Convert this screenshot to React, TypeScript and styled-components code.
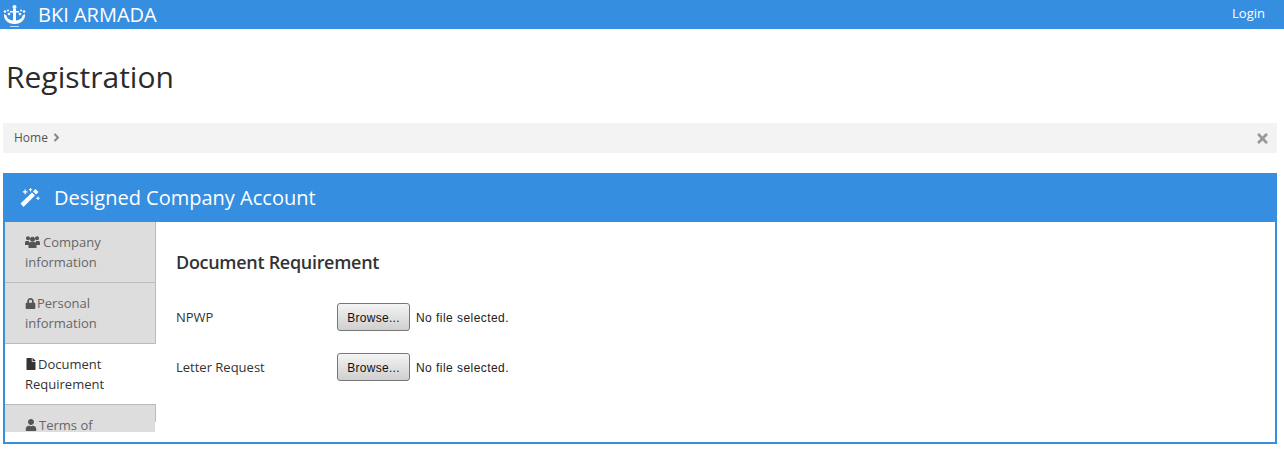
import React from "react";
import styled, { createGlobalStyle } from "styled-components";
import { FaAngleRight, FaFile, FaLock, FaTimes, FaUser } from "react-icons/fa";

const GlobalStyle = createGlobalStyle`
  html, body {
    margin: 0;
    padding: 0;
    background: #fff;
    font-family: "Open Sans", sans-serif;
    color: #333;
    overflow: hidden;
  }
`;

const Navbar = styled.div`
  height: 29px;
  background: #368ee0;
  display: flex;
  align-items: center;
  justify-content: space-between;
  padding: 0 19px 0 3px;
  color: #fff;
`;

const Brand = styled.div`
  display: flex;
  align-items: center;
  gap: 12px;
  font-size: 20px;
  line-height: 29px;
`;

const LoginLink = styled.a`
  font-size: 13px;
  position: relative;
  top: -2px;
`;

const Main = styled.div`
  padding: 0 7px 0 3px;
`;

const PageTitle = styled.h1`
  margin: 0;
  padding: 26px 0 0 3px;
  height: 67px;
  box-sizing: border-box;
  font-size: 30px;
  line-height: 44px;
  font-weight: 400;
  color: #2b2b2b;
`;

const Breadcrumb = styled.div`
  margin-top: 27px;
  height: 30px;
  background: #f3f3f3;
  display: flex;
  align-items: center;
  justify-content: space-between;
  padding: 0 7px 1px 11px;
  box-sizing: border-box;
  font-size: 12px;
  color: #555;
`;

const Crumb = styled.span`
  display: flex;
  align-items: center;
  gap: 2px;

  svg {
    font-size: 13px;
    color: #888;
  }
`;

const CloseIcon = styled(FaTimes)`
  color: #999;
  font-size: 15px;
  position: relative;
  top: 1px;
`;

const Panel = styled.div`
  margin-top: 20px;
  height: 271px;
  box-sizing: border-box;
  border: 2px solid #368ee0;
  display: flex;
  flex-direction: column;
`;

const PanelHeader = styled.div`
  height: 47px;
  flex: none;
  background: #368ee0;
  color: #fff;
  display: flex;
  align-items: center;
  gap: 14px;
  padding: 0 0 2px 15px;
  box-sizing: border-box;
  font-size: 20px;
`;

const PanelBody = styled.div`
  display: flex;
  flex: 1;
`;

const Sidebar = styled.div`
  position: relative;
  width: 151px;
  height: 210px;
  overflow: hidden;
  flex: none;

  &::after {
    content: "";
    position: absolute;
    top: 0;
    right: 0;
    width: 1px;
    height: 200px;
    background: #bbb;
  }
`;

const Tab = styled.div<{ $active?: boolean; $iconSize?: number; $iconGap?: number }>`
  position: relative;
  z-index: ${(p) => (p.$active ? 1 : 0)};
  width: ${(p) => (p.$active ? "151px" : "150px")};
  height: 61px;
  box-sizing: border-box;
  padding: 10px 20px 0;
  border-bottom: 1px solid #bbb;
  background: ${(p) => (p.$active ? "#fff" : "#ddd")};
  color: ${(p) => (p.$active ? "#333" : "#666")};
  font-size: 13px;
  line-height: 20px;

  svg {
    font-size: ${(p) => p.$iconSize ?? 12}px;
    vertical-align: -1px;
    margin-right: ${(p) => p.$iconGap ?? 3}px;
    color: ${(p) => (p.$active ? "#333" : "#555")};
  }
`;

const Content = styled.div`
  flex: 1;
  padding: 27px 20px 0;
`;

const SectionTitle = styled.h3`
  margin: 0 0 28px;
  font-size: 18px;
  line-height: 26px;
  font-weight: 600;
  letter-spacing: -0.3px;
  color: #333;
`;

const FieldRow = styled.div`
  display: flex;
  align-items: center;
  height: 28px;
  margin-bottom: 22px;
  font-size: 13px;
`;

const FieldLabel = styled.label`
  width: 161px;
  flex: none;
`;

const BrowseButton = styled.button`
  width: 73px;
  height: 28px;
  padding: 2px 0 0;
  border: 1px solid #777;
  border-radius: 3px;
  background: linear-gradient(#f4f4f4, #cfcfcf);
  font-family: "Liberation Sans", Arial, sans-serif;
  font-size: 12px;
  letter-spacing: 0.3px;
  color: #111;
`;

const FileName = styled.span`
  margin-left: 6px;
  padding-top: 2px;
  font-family: "Liberation Sans", Arial, sans-serif;
  font-size: 12px;
  letter-spacing: 0.45px;
  color: #222;
`;

const Logo = () => (
  <svg width="23" height="24" viewBox="0 0 23 24" fill="#fff" aria-hidden="true" style={{ marginTop: 3 }}>
    <circle cx="11.500" cy="3" r="2" />
    <rect x="10" y="5" width="3" height="13" />
    <rect x="7" y="7" width="9" height="1.500" />
    <circle cx="2" cy="7.500" r="1.300" />
    <circle cx="5" cy="6.500" r="1" />
    <circle cx="18" cy="6.500" r="1" />
    <circle cx="21" cy="7.500" r="1.300" />
    <circle cx="6" cy="10" r="1.300" />
    <circle cx="17" cy="10" r="1.300" />
    <path d="M1 10l2.500 1.500c.5 3.500 3.500 5 8 5s7.500-1.500 8-5L22 10c.5 5.500-3.500 10-10.500 10S.5 15.500 1 10z" />
    <rect x="7" y="22" width="9" height="1" opacity="0.7" />
  </svg>
);

const WandIcon = () => (
  <svg width="20" height="19" viewBox="0 0 20 19" fill="#fff" aria-hidden="true">
    <path d="M0.500 15.500L12 4.500l3 3L3.500 19z" />
    <path d="M13 3.500L15.500 1l3 3L16 6.500z" />
    <path d="M4.500 1.500h1.300v1.700h1.700v1.300H5.800v1.700H4.500V4.500H2.800V3.200h1.700z" />
    <path d="M10 0h1v1.200h1.200v1H11v1.200h-1V2.200H8.800v-1H10z" />
    <path d="M17.500 8.500h1v1.200h1.200v1h-1.200v1.200h-1v-1.200h-1.200v-1h1.200z" />
  </svg>
);

const UsersIcon = () => (
  <svg width="15" height="12" viewBox="0 0 15 12" fill="currentColor" aria-hidden="true">
    <circle cx="3" cy="2.300" r="2" />
    <circle cx="12" cy="2.300" r="2" />
    <path d="M0 9V6.500C0 5.500.8 5 1.800 5H4v4z" />
    <path d="M15 9V6.500c0-1-.8-1.500-1.800-1.500H11v4z" />
    <circle cx="7.500" cy="3.200" r="2.500" />
    <path d="M3.500 12V8c0-1.300 1-2 2-2h4c1 0 2 .7 2 2v4z" />
  </svg>
);

const App = () => {
  return (
    <>
      <GlobalStyle />
      <Navbar>
        <Brand>
          <Logo />
          BKI ARMADA
        </Brand>
        <LoginLink>Login</LoginLink>
      </Navbar>
      <Main>
        <PageTitle>Registration</PageTitle>
        <Breadcrumb>
          <Crumb>
            Home <FaAngleRight />
          </Crumb>
          <CloseIcon />
        </Breadcrumb>
        <Panel>
          <PanelHeader>
            <WandIcon />
            Designed Company Account
          </PanelHeader>
          <PanelBody>
            <Sidebar>
              <Tab>
                <UsersIcon />
                Company information
              </Tab>
              <Tab $iconSize={11} $iconGap={1}>
                <FaLock />
                Personal information
              </Tab>
              <Tab $active $iconSize={12} $iconGap={1}>
                <FaFile />
                Document Requirement
              </Tab>
              <Tab $iconSize={12} $iconGap={2}>
                <FaUser />
                Terms of
              </Tab>
            </Sidebar>
            <Content>
              <SectionTitle>Document Requirement</SectionTitle>
              <FieldRow>
                <FieldLabel>NPWP</FieldLabel>
                <BrowseButton>Browse...</BrowseButton>
                <FileName>No file selected.</FileName>
              </FieldRow>
              <FieldRow>
                <FieldLabel>Letter Request</FieldLabel>
                <BrowseButton>Browse...</BrowseButton>
                <FileName>No file selected.</FileName>
              </FieldRow>
            </Content>
          </PanelBody>
        </Panel>
      </Main>
    </>
  );
};

export default App;
